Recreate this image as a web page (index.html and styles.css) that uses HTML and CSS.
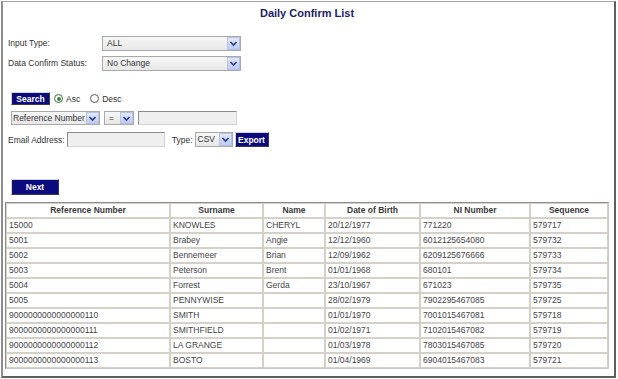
FILE: index.html
```html
<!DOCTYPE html>
<html>
<head>
  <link rel="stylesheet" href="styles.css">
</head>
<body>
  <div class="frame">
    <h1 class="title">Daily Confirm List</h1>

    <div class="fields">
      <span class="field-label">Input Type:</span>
      <span class="select select-wide">
        <span class="select-value">ALL</span>
        <span class="select-arrow"><svg width="11" height="11" viewBox="0 0 11 11"><path d="M2.5 4 L5.5 7 L8.5 4" fill="none" stroke="#2b3d8c" stroke-width="1.7"/></svg></span>
      </span>
      <span class="field-label">Data Confirm Status:</span>
      <span class="select select-wide">
        <span class="select-value">No Change</span>
        <span class="select-arrow"><svg width="11" height="11" viewBox="0 0 11 11"><path d="M2.5 4 L5.5 7 L8.5 4" fill="none" stroke="#2b3d8c" stroke-width="1.7"/></svg></span>
      </span>
    </div>

    <div class="row search-row">
      <button class="nav-button search-button">Search</button>
      <span class="radio radio-checked"></span>
      <span class="radio-label">Asc</span>
      <span class="radio"></span>
      <span class="radio-label">Desc</span>
    </div>

    <div class="row filter-row">
      <span class="select select-column">
        <span class="select-value">Reference Number</span>
        <span class="select-arrow"><svg width="11" height="11" viewBox="0 0 11 11"><path d="M2.5 4 L5.5 7 L8.5 4" fill="none" stroke="#2b3d8c" stroke-width="1.7"/></svg></span>
      </span>
      <span class="select select-operator">
        <span class="select-value">=</span>
        <span class="select-arrow"><svg width="11" height="11" viewBox="0 0 11 11"><path d="M2.5 4 L5.5 7 L8.5 4" fill="none" stroke="#2b3d8c" stroke-width="1.7"/></svg></span>
      </span>
      <input class="text-input filter-input" type="text">
    </div>

    <div class="row email-row">
      <span>Email Address:</span>
      <input class="text-input email-input" type="text">
      <span class="type-label">Type:</span>
      <span class="select select-type">
        <span class="select-value">CSV</span>
        <span class="select-arrow"><svg width="11" height="11" viewBox="0 0 11 11"><path d="M2.5 4 L5.5 7 L8.5 4" fill="none" stroke="#2b3d8c" stroke-width="1.7"/></svg></span>
      </span>
      <button class="nav-button export-button">Export</button>
    </div>

    <div class="row next-row">
      <button class="nav-button next-button">Next</button>
    </div>

    <table class="results">
      <colgroup>
        <col class="col-ref">
        <col class="col-surname">
        <col class="col-name">
        <col class="col-dob">
        <col class="col-ni">
        <col class="col-seq">
      </colgroup>
      <tr>
        <th>Reference Number</th>
        <th>Surname</th>
        <th>Name</th>
        <th>Date of Birth</th>
        <th>NI Number</th>
        <th>Sequence</th>
      </tr>
      <tr><td>15000</td><td>KNOWLES</td><td>CHERYL</td><td>20/12/1977</td><td>771220</td><td>579717</td></tr>
      <tr><td>5001</td><td>Brabey</td><td>Angie</td><td>12/12/1960</td><td>6012125654080</td><td>579732</td></tr>
      <tr><td>5002</td><td>Bennemeer</td><td>Brian</td><td>12/09/1962</td><td>6209125676666</td><td>579733</td></tr>
      <tr><td>5003</td><td>Peterson</td><td>Brent</td><td>01/01/1968</td><td>680101</td><td>579734</td></tr>
      <tr><td>5004</td><td>Forrest</td><td>Gerda</td><td>23/10/1967</td><td>671023</td><td>579735</td></tr>
      <tr><td>5005</td><td>PENNYWISE</td><td></td><td>28/02/1979</td><td>7902295467085</td><td>579725</td></tr>
      <tr><td>9000000000000000110</td><td>SMITH</td><td></td><td>01/01/1970</td><td>7001015467081</td><td>579718</td></tr>
      <tr><td>9000000000000000111</td><td>SMITHFIELD</td><td></td><td>01/02/1971</td><td>7102015467082</td><td>579719</td></tr>
      <tr><td>9000000000000000112</td><td>LA GRANGE</td><td></td><td>01/03/1978</td><td>7803015467085</td><td>579720</td></tr>
      <tr><td>9000000000000000113</td><td>BOSTO</td><td></td><td>01/04/1969</td><td>6904015467083</td><td>579721</td></tr>
    </table>
  </div>
</body>
</html>
```

FILE: styles.css
```css
body {
  margin: 0;
  background-color: white;
  font-family: "Liberation Sans", Arial, sans-serif;
  font-size: 8.5px;
  color: #333;
}

.frame {
  box-sizing: border-box;
  height: 377px;
  margin: 1px 2px 0 1px;
  padding: 0 5px 0 2px;
  border-top: 1px solid #a6a6a6;
  border-left: 2px solid #8e8e8e;
  border-right: 2px solid #5e5e5e;
  border-bottom: 2px solid #5e5e5e;
}

.title {
  margin: 5px 0 0;
  font-size: 11px;
  line-height: 13px;
  text-align: center;
  color: #1c1c6a;
}

.fields {
  display: grid;
  grid-template-columns: 94px 139px;
  row-gap: 5px;
  margin-top: 16px;
  padding-left: 3px;
}

.field-label {
  line-height: 15px;
}

.select {
  box-sizing: border-box;
  display: flex;
  height: 15px;
  border: 1px solid #a9a9a9;
  background: linear-gradient(#f7f7f7, #e7e7e7);
}

.select-value {
  flex: 1;
  padding-left: 2px;
  line-height: 13px;
  white-space: nowrap;
  color: #333;
}

.select-wide .select-value {
  padding-left: 4px;
}

.select-arrow {
  box-sizing: border-box;
  display: flex;
  flex-shrink: 0;
  align-items: center;
  justify-content: center;
  width: 13px;
  border: 1px solid #b3c2e6;
  background: linear-gradient(#e2e9fb, #bccbef);
}

.row {
  display: flex;
  align-items: center;
  padding-left: 6px;
}

.nav-button {
  box-sizing: border-box;
  padding: 0;
  border: 1px solid;
  border-color: #d6d6d6 #3c3c3c #3c3c3c #d6d6d6;
  background-color: #0b0b80;
  color: white;
  font-family: "Liberation Sans", Arial, sans-serif;
  font-size: 8.5px;
  font-weight: bold;
}

.search-row {
  height: 13px;
  margin-top: 21px;
}

.search-button {
  width: 39px;
  height: 13px;
}

.radio {
  box-sizing: border-box;
  display: flex;
  align-items: center;
  justify-content: center;
  width: 9px;
  height: 9px;
  margin-left: 4px;
  border: 1px solid #555;
  border-radius: 50%;
  background-color: white;
}

.radio-checked {
  border-color: #3f6f3f;
}

.radio-checked::after {
  content: "";
  width: 4px;
  height: 4px;
  border-radius: 50%;
  background-color: #2f8a35;
}

.radio-label {
  margin-left: 3px;
  margin-right: 6px;
}

.filter-row {
  height: 14px;
  margin-top: 6px;
  gap: 4px;
}

.filter-row .select {
  height: 14px;
}

.select-column {
  width: 89px;
}

.select-column .select-value {
  padding-left: 1px;
}

.select-operator {
  width: 30px;
}

.select-operator .select-value {
  padding-left: 4px;
}

.text-input {
  box-sizing: border-box;
  margin: 0;
  padding: 0;
  border: 1px solid;
  border-color: #8a8a8a #d4d4d4 #d4d4d4 #8a8a8a;
  background-color: #efefef;
}

.filter-input {
  width: 99px;
  height: 14px;
}

.email-row {
  height: 15px;
  margin-top: 7px;
  padding-left: 3px;
}

.email-input {
  width: 98px;
  height: 15px;
  margin-left: 2px;
}

.type-label {
  margin-left: 7px;
}

.select-type {
  width: 38px;
  margin-left: 2px;
}

.export-button {
  width: 34px;
  height: 15px;
  margin-left: 2px;
}

.next-row {
  height: 16px;
  margin-top: 32px;
}

.next-button {
  width: 48px;
  height: 16px;
}

.results {
  box-sizing: border-box;
  width: 604px;
  margin-top: 7px;
  table-layout: fixed;
  border-collapse: separate;
  border-spacing: 0;
  border: 1px solid;
  border-color: #8c8c8c #c8c8c8 #c8c8c8 #8c8c8c;
  color: #444;
}

.results th,
.results td {
  padding: 0 2px;
  line-height: 13px;
  border: 1px solid #d5d1c7;
  white-space: nowrap;
  overflow: hidden;
  text-align: left;
}

.results th {
  text-align: center;
  color: #3a3a3a;
}

.col-ref { width: 164px; }
.col-surname { width: 93px; }
.col-name { width: 62px; }
.col-dob { width: 95px; }
.col-ni { width: 110px; }
.col-seq { width: 78px; }
```
